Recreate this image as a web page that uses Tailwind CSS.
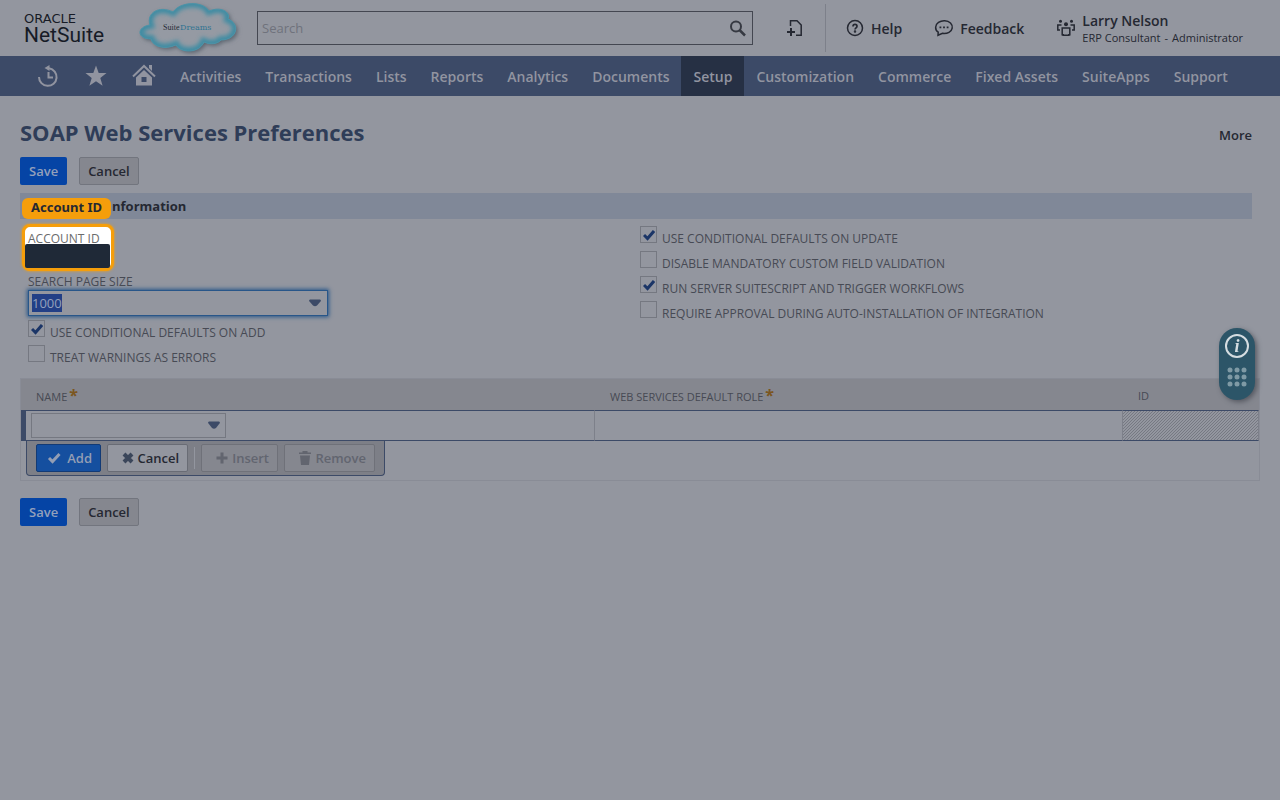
<!DOCTYPE html>
<html lang="en">
<head>
    <meta charset="UTF-8">
    <meta name="viewport" content="width=device-width, initial-scale=1.0">
    <title>SOAP Web Services Preferences - NetSuite</title>
    <script src="https://cdn.jsdelivr.net/npm/@tailwindcss/browser@4"></script>
</head>
<body class="min-h-screen bg-[#93969f] font-['Open_Sans',sans-serif] text-[13px] text-[#252832]">
    <header class="flex h-14 items-center pl-6">
        <a href="#" aria-label="Oracle NetSuite" class="block w-20 pt-1 text-[#171b26]">
            <span class="block font-['DejaVu_Sans',sans-serif] text-[13px] leading-[10px]">ORACLE</span>
            <span class="block font-[Roboto,sans-serif] text-[21px] leading-[22px]">NetSuite</span>
        </a>
        <svg class="ml-[31px] h-14 w-[108px] shrink-0" viewBox="0 0 108 56">
            <defs>
                <filter id="soft" x="-20%" y="-20%" width="140%" height="140%"><feGaussianBlur stdDeviation="2"/></filter>
                <clipPath id="cloudClip"><path id="cloud" d="M16 39C2 39 1 27 15 25C11 13 24 5 38 12C46 1 68 1 74 11C86 6 96 12 93 19C106 24 102 40 86 40C83 44 75 45 69 42C64 54 45 53 41 45C30 50 18 47 16 39Z"/></clipPath>
            </defs>
            <use href="#cloud" fill="#5b6570" filter="url(#soft)" transform="translate(2 2)"/>
            <use href="#cloud" fill="#959aa3"/>
            <g clip-path="url(#cloudClip)"><use href="#cloud" fill="none" stroke="#3f8ca3" stroke-width="8" filter="url(#soft)"/></g>
            <use href="#cloud" fill="none" stroke="#4b93a8"/>
            <text x="28" y="30" font-family="Liberation Serif, serif" font-size="8" fill="#242a35">Suite</text>
            <text x="45" y="30" font-family="DejaVu Serif, serif" font-size="8" fill="#2f7391">Dreams</text>
        </svg>
        <form class="ml-[14px] flex h-[34px] w-[496px] items-center border border-[#444751] pr-0.5" onsubmit="return false">
            <input type="search" aria-label="Search" placeholder="Search" class="h-full min-w-0 flex-1 bg-transparent px-1 outline-none placeholder:text-[#6f727c]">
            <button type="submit" aria-label="Search" class="p-0.5 text-[#363942]">
                <svg class="size-5" viewBox="0 0 20 20" fill="none" stroke="currentColor" stroke-width="2"><circle cx="8" cy="8.500" r="5"/><path d="M11.500 12L17 17.500" stroke-width="2.500"/></svg>
            </button>
        </form>
        <button type="button" aria-label="Create new" class="ml-8">
            <svg class="size-5" viewBox="0 0 20 20" fill="none" stroke="currentColor" stroke-width="1.5"><path d="M5.500 8V2.800H12L16.200 7V17.200H11"/><path d="M2 14H10M6 10V18" stroke-width="2"/></svg>
        </button>
        <div class="ml-5 h-12 w-px bg-[#7d808a]"></div>
        <button type="button" class="ml-[19px] flex items-center gap-1.5 text-sm font-semibold">
            <svg class="size-5" viewBox="0 0 20 20" fill="none" stroke="currentColor" stroke-width="1.5"><circle cx="10" cy="10" r="7.500"/><path d="M8 8.400C8 5.600 12 5.800 12 8.200C12 9.800 10 9.800 10 11.600" stroke-width="1.700"/><circle cx="10" cy="13.600" r=".5"/></svg>
            <span class="pt-0.5">Help</span>
        </button>
        <button type="button" class="ml-8 flex items-center gap-1.5 text-sm font-semibold">
            <svg class="size-5" viewBox="0 0 20 20" fill="none" stroke="currentColor" stroke-width="1.5"><path d="M4 17.300L4.200 14.200C.5 11.500 1 6.800 4.500 4.400C8 2 13.500 2.200 16.500 5C19.500 8 18.500 12.500 15 14.300C12.500 15.600 10 15.500 8.500 15.300Z"/><path d="M5.500 9.400H7.300M9.100 9.400H10.900M12.700 9.400H14.500" stroke-width="1.900"/></svg>
            <span class="pt-0.5">Feedback</span>
        </button>
        <button type="button" class="ml-8 flex items-center gap-1.5 text-left">
            <svg class="size-5" viewBox="0 0 20 20" fill="none" stroke="currentColor" stroke-width="1.5"><path d="M6.200 10H13.800V16.800H12.800V17.300H7.200V16.800H6.200Z"/><path d="M5.500 7H1.800V12H4M14.500 7H18.200V12H16"/><g fill="currentColor" stroke="none"><circle cx="10" cy="6.300" r="2"/><circle cx="4.500" cy="3.200" r="1.500"/><circle cx="15.500" cy="3.200" r="1.500"/></g></svg>
            <span class="pt-0.5">
                <span class="block text-sm font-semibold leading-[18px]">Larry Nelson</span>
                <span class="flex gap-1 text-[11px] leading-4"><span>ERP Consultant</span><span>-</span><span>Administrator</span></span>
            </span>
        </button>
    </header>

    <nav class="flex h-10 items-stretch bg-[#3c4a67] pl-6 text-sm font-semibold text-[#9194a0]">
        <a href="#" aria-label="Recent" class="flex w-12 items-center justify-center">
            <svg class="size-6" viewBox="0 0 24 24" fill="none" stroke="currentColor" stroke-width="2"><path d="M13 4.300A8.800 8.800 0 1 1 3 13"/><path d="M12.500 8V13.500H17"/><path d="M8.500 4L13.500 1V7Z" fill="currentColor" stroke="none"/></svg>
        </a>
        <a href="#" aria-label="Shortcuts" class="flex w-12 items-center justify-center">
            <svg class="size-6" viewBox="0 0 24 24" fill="currentColor"><path d="M12 1.500L14.700 9H22.500L16.300 13.900L18.600 21.700L12 17.200L5.400 21.700L7.700 13.900L1.500 9H9.300Z"/></svg>
        </a>
        <a href="#" aria-label="Home" class="flex w-12 items-center justify-center">
            <svg class="size-6" viewBox="0 0 24 24" fill="currentColor"><path d="M1 12.500L12 2L23 12.500" fill="none" stroke="currentColor" stroke-width="2"/><path d="M17 1H20V7L17 4Z"/><path fill-rule="evenodd" d="M12 6L20 13.500V21.500H4V13.500ZM9.500 13V18H14.500V13Z"/></svg>
        </a>
        <a href="#" class="flex items-center px-3 pt-0.5">Activities</a>
        <a href="#" class="flex items-center px-3 pt-0.5">Transactions</a>
        <a href="#" class="flex items-center px-3 pt-0.5">Lists</a>
        <a href="#" class="flex items-center px-3 pt-0.5">Reports</a>
        <a href="#" class="flex items-center px-3 pt-0.5">Analytics</a>
        <a href="#" class="flex items-center px-3 pt-0.5">Documents</a>
        <a href="#" class="flex items-center bg-[#263044] px-3 pt-0.5">Setup</a>
        <a href="#" class="flex items-center px-3 pt-0.5">Customization</a>
        <a href="#" class="flex items-center px-3 pt-0.5">Commerce</a>
        <a href="#" class="flex items-center px-3 pt-0.5">Fixed Assets</a>
        <a href="#" class="flex items-center px-3 pt-0.5">SuiteApps</a>
        <a href="#" class="flex items-center px-3 pt-0.5">Support</a>
    </nav>

    <main class="px-5 pt-5">
        <div class="flex items-center justify-between pr-2">
            <h1 class="text-[22px] leading-8 font-bold text-[#2f3d58]">SOAP Web Services Preferences</h1>
            <a href="#" class="pt-2 font-semibold">More</a>
        </div>
        <div class="mt-[9px] flex gap-3">
            <button type="button" class="h-7 rounded-xs bg-[#0544a5] px-[9px] pt-0.5 font-semibold text-[#93a0bb]">Save</button>
            <button type="button" class="h-7 rounded-xs border border-[#72757e] bg-[#85878f] px-2 pt-0.5 font-semibold">Cancel</button>
        </div>

        <section>
            <h2 class="mt-2 mr-2 flex h-[26px] bg-[#808898] pl-0.5 leading-[26px] font-bold">
                <span class="mt-[5px] h-[21px] w-[89px] rounded-md bg-[#f59e0b] text-center font-['Noto_Sans',sans-serif] leading-[19px]">Account ID</span>
                <span class="pl-px">nformation</span>
            </h2>
            <div class="grid grid-cols-2 text-xs text-[#474a54]">
                <div class="pt-2 pl-2">
                    <div class="relative h-[47px]">
                        <div class="absolute -top-[3px] -left-1.5 h-[47px] w-[92px] rounded-lg border-3 border-[#f59e0b] bg-white pt-1 pl-[3px] text-[#6b6b6b] shadow-[0_0_3px_#f59e0b]">
                            <span class="block h-[13px] leading-4">ACCOUNT ID</span>
                            <span class="relative -left-[3px] block h-6 w-[85px] rounded-xs bg-[#1f2937]"></span>
                        </div>
                    </div>
                    <label for="pageSize" class="block leading-4">SEARCH PAGE SIZE</label>
                    <div class="flex h-[26px] w-[300px] items-center justify-between border border-[#285689] pr-1.5 pl-[3px] shadow-[0_0_4px_1px_#285689]">
                        <input id="pageSize" type="text" value="1000" role="combobox" class="h-[18px] w-[30px] bg-[#223f86] text-[13px] text-[#93a0bb] outline-none">
                        <svg class="h-2 w-3 text-[#3c4a67]" viewBox="0 0 12 8" fill="currentColor"><path d="M1 .5H11Q12.500 1 11.500 2.500L8 6.500Q6 8 4 6.500L.5 2.500Q-.5 1 1 .5Z"/></svg>
                    </div>
                    <div class="mt-1">
                        <label class="relative flex h-[25px] gap-[5px]">
                            <input type="checkbox" checked class="peer size-[17px] appearance-none border border-[#757881]">
                            <svg class="absolute top-[3px] left-[3px] hidden size-3 text-[#1b3567] peer-checked:block" viewBox="0 0 12 12" fill="none" stroke="currentColor" stroke-width="3"><path d="M1 6L4.500 9.500L11 2"/></svg>
                            <span class="pt-[5px] leading-4">USE CONDITIONAL DEFAULTS ON ADD</span>
                        </label>
                        <label class="relative flex h-[25px] gap-[5px]">
                            <input type="checkbox" class="peer size-[17px] appearance-none border border-[#757881]">
                            <svg class="absolute top-[3px] left-[3px] hidden size-3 text-[#1b3567] peer-checked:block" viewBox="0 0 12 12" fill="none" stroke="currentColor" stroke-width="3"><path d="M1 6L4.500 9.500L11 2"/></svg>
                            <span class="pt-[5px] leading-4">TREAT WARNINGS AS ERRORS</span>
                        </label>
                    </div>
                </div>
                <div class="pt-[7px]">
                    <label class="relative flex h-[25px] gap-[5px]">
                        <input type="checkbox" checked class="peer size-[17px] appearance-none border border-[#757881]">
                        <svg class="absolute top-[3px] left-[3px] hidden size-3 text-[#1b3567] peer-checked:block" viewBox="0 0 12 12" fill="none" stroke="currentColor" stroke-width="3"><path d="M1 6L4.500 9.500L11 2"/></svg>
                        <span class="pt-[5px] leading-4">USE CONDITIONAL DEFAULTS ON UPDATE</span>
                    </label>
                    <label class="relative flex h-[25px] gap-[5px]">
                        <input type="checkbox" class="peer size-[17px] appearance-none border border-[#757881]">
                        <svg class="absolute top-[3px] left-[3px] hidden size-3 text-[#1b3567] peer-checked:block" viewBox="0 0 12 12" fill="none" stroke="currentColor" stroke-width="3"><path d="M1 6L4.500 9.500L11 2"/></svg>
                        <span class="pt-[5px] leading-4">DISABLE MANDATORY CUSTOM FIELD VALIDATION</span>
                    </label>
                    <label class="relative flex h-[25px] gap-[5px]">
                        <input type="checkbox" checked class="peer size-[17px] appearance-none border border-[#757881]">
                        <svg class="absolute top-[3px] left-[3px] hidden size-3 text-[#1b3567] peer-checked:block" viewBox="0 0 12 12" fill="none" stroke="currentColor" stroke-width="3"><path d="M1 6L4.500 9.500L11 2"/></svg>
                        <span class="pt-[5px] leading-4">RUN SERVER SUITESCRIPT AND TRIGGER WORKFLOWS</span>
                    </label>
                    <label class="relative flex h-[25px] gap-[5px]">
                        <input type="checkbox" class="peer size-[17px] appearance-none border border-[#757881]">
                        <svg class="absolute top-[3px] left-[3px] hidden size-3 text-[#1b3567] peer-checked:block" viewBox="0 0 12 12" fill="none" stroke="currentColor" stroke-width="3"><path d="M1 6L4.500 9.500L11 2"/></svg>
                        <span class="pt-[5px] leading-4">REQUIRE APPROVAL DURING AUTO-INSTALLATION OF INTEGRATION</span>
                    </label>
                </div>
            </div>
        </section>

        <section class="mt-2 h-[103px] border border-[#898c96]">
            <table class="w-full table-fixed border-separate border-spacing-0">
                <thead>
                    <tr class="h-[31px] bg-[#85878f] text-left text-[11px] text-[#474a54]">
                        <th scope="col" class="w-[573px] pt-[3px] pb-0 pl-[15px] leading-4 font-normal">NAME<span class="pl-0.5 text-base leading-4 font-bold text-[#7b5620]">*</span></th>
                        <th scope="col" class="pt-[3px] pb-0 pl-4 leading-4 font-normal">WEB SERVICES DEFAULT ROLE<span class="pl-0.5 text-base leading-4 font-bold text-[#7b5620]">*</span></th>
                        <th scope="col" class="w-[137px] pt-[3px] pb-0 pl-4 leading-4 font-normal">ID</th>
                    </tr>
                </thead>
                <tbody>
                    <tr class="h-[31px]">
                        <td class="border-y border-l-5 border-[#3c4a67] py-0 pl-[5px]">
                            <div class="relative w-[195px]">
                                <select aria-label="Name" class="block h-[25px] w-full appearance-none border border-[#757881] pl-1"><option></option></select>
                                <svg class="pointer-events-none absolute top-2 right-1.5 h-2 w-3 text-[#3c4a67]" viewBox="0 0 12 8" fill="currentColor"><path d="M1 .5H11Q12.500 1 11.500 2.500L8 7Q6 8.500 4 7L.5 2.500Q-.5 1 1 .5Z"/></svg>
                            </div>
                        </td>
                        <td class="border-y border-l border-y-[#3c4a67] border-l-[#7d808a]"></td>
                        <td class="border border-x-[#7d808a] border-y-[#3c4a67] bg-[linear-gradient(135deg,#767982_16%,#93969f_16%_50%,#767982_50%_66%,#93969f_66%)] bg-size-[3px_3px]"></td>
                    </tr>
                </tbody>
            </table>
            <div class="ml-[5px] flex h-[35px] w-[359px] items-center rounded-b-sm border border-t-0 border-[#3c4a67] bg-[#7d7f87] pl-[9px] font-semibold">
                <button type="button" class="flex h-7 w-[65px] items-center justify-end gap-1.5 rounded-xs border border-[#123a75] bg-[#154f9f] pr-2 text-[#939eb4]">
                    <svg class="h-3 w-3.5" viewBox="0 0 14 12" fill="none" stroke="currentColor" stroke-width="3"><path d="M2 6L5.500 9.500L12.500 2"/></svg>
                    <span class="pt-0.5">Add</span>
                </button>
                <button type="button" class="ml-1.5 flex h-7 w-[81px] items-center justify-end gap-[3px] rounded-xs border border-[#696c75] bg-[#93969f] pr-2">
                    <svg class="size-3 text-[#3b465a]" viewBox="0 0 12 12" fill="none" stroke="currentColor" stroke-width="4"><path d="M2 2L10 10M10 2L2 10"/></svg>
                    <span class="pt-0.5">Cancel</span>
                </button>
                <div class="mx-1.5 h-[22px] w-px bg-[#93969f]"></div>
                <button type="button" disabled class="flex h-7 w-[77px] items-center justify-end gap-1 rounded-xs border border-[#6f7179] bg-[#85878f] pr-2 text-[#62656f]">
                    <svg class="size-3" viewBox="0 0 12 12" fill="none" stroke="currentColor" stroke-width="3"><path d="M6 .5V11.500M.5 6H11.500"/></svg>
                    <span class="pt-0.5">Insert</span>
                </button>
                <button type="button" disabled class="ml-1.5 flex h-7 w-[91px] items-center justify-end gap-1 rounded-xs border border-[#6f7179] bg-[#85878f] pr-2 text-[#62656f]">
                    <svg class="h-3.5 w-3" viewBox="0 0 12 14" fill="currentColor"><path d="M0 1.500H3.500V0H8.500V1.500H12V3H0ZM1 4.500H11L10 14H2Z"/></svg>
                    <span class="pt-0.5">Remove</span>
                </button>
            </div>
        </section>

        <div class="mt-[17px] flex gap-3">
            <button type="button" class="h-7 rounded-xs bg-[#0544a5] px-[9px] pt-0.5 font-semibold text-[#93a0bb]">Save</button>
            <button type="button" class="h-7 rounded-xs border border-[#72757e] bg-[#85878f] px-2 pt-0.5 font-semibold">Cancel</button>
        </div>
    </main>

    <aside class="fixed top-[328px] right-[25px] flex h-[72px] w-9 flex-col items-center gap-[9px] rounded-full bg-[#2c5568] pt-1.5 shadow-[2px_2px_5px_#555861]">
        <button type="button" aria-label="Info" class="size-6 rounded-full border-2 border-[#d5dde1] font-['Liberation_Serif',serif] text-lg leading-5 font-bold text-[#d5dde1] italic">i</button>
        <svg class="size-5" viewBox="0 0 20 20" fill="#7f9aa5"><circle cx="3" cy="3" r="2.500"/><circle cx="10" cy="3" r="2.500"/><circle cx="17" cy="3" r="2.500"/><circle cx="3" cy="10" r="2.500"/><circle cx="10" cy="10" r="2.500"/><circle cx="17" cy="10" r="2.500"/><circle cx="3" cy="17" r="2.500"/><circle cx="10" cy="17" r="2.500"/><circle cx="17" cy="17" r="2.500"/></svg>
    </aside>
</body>
</html>
